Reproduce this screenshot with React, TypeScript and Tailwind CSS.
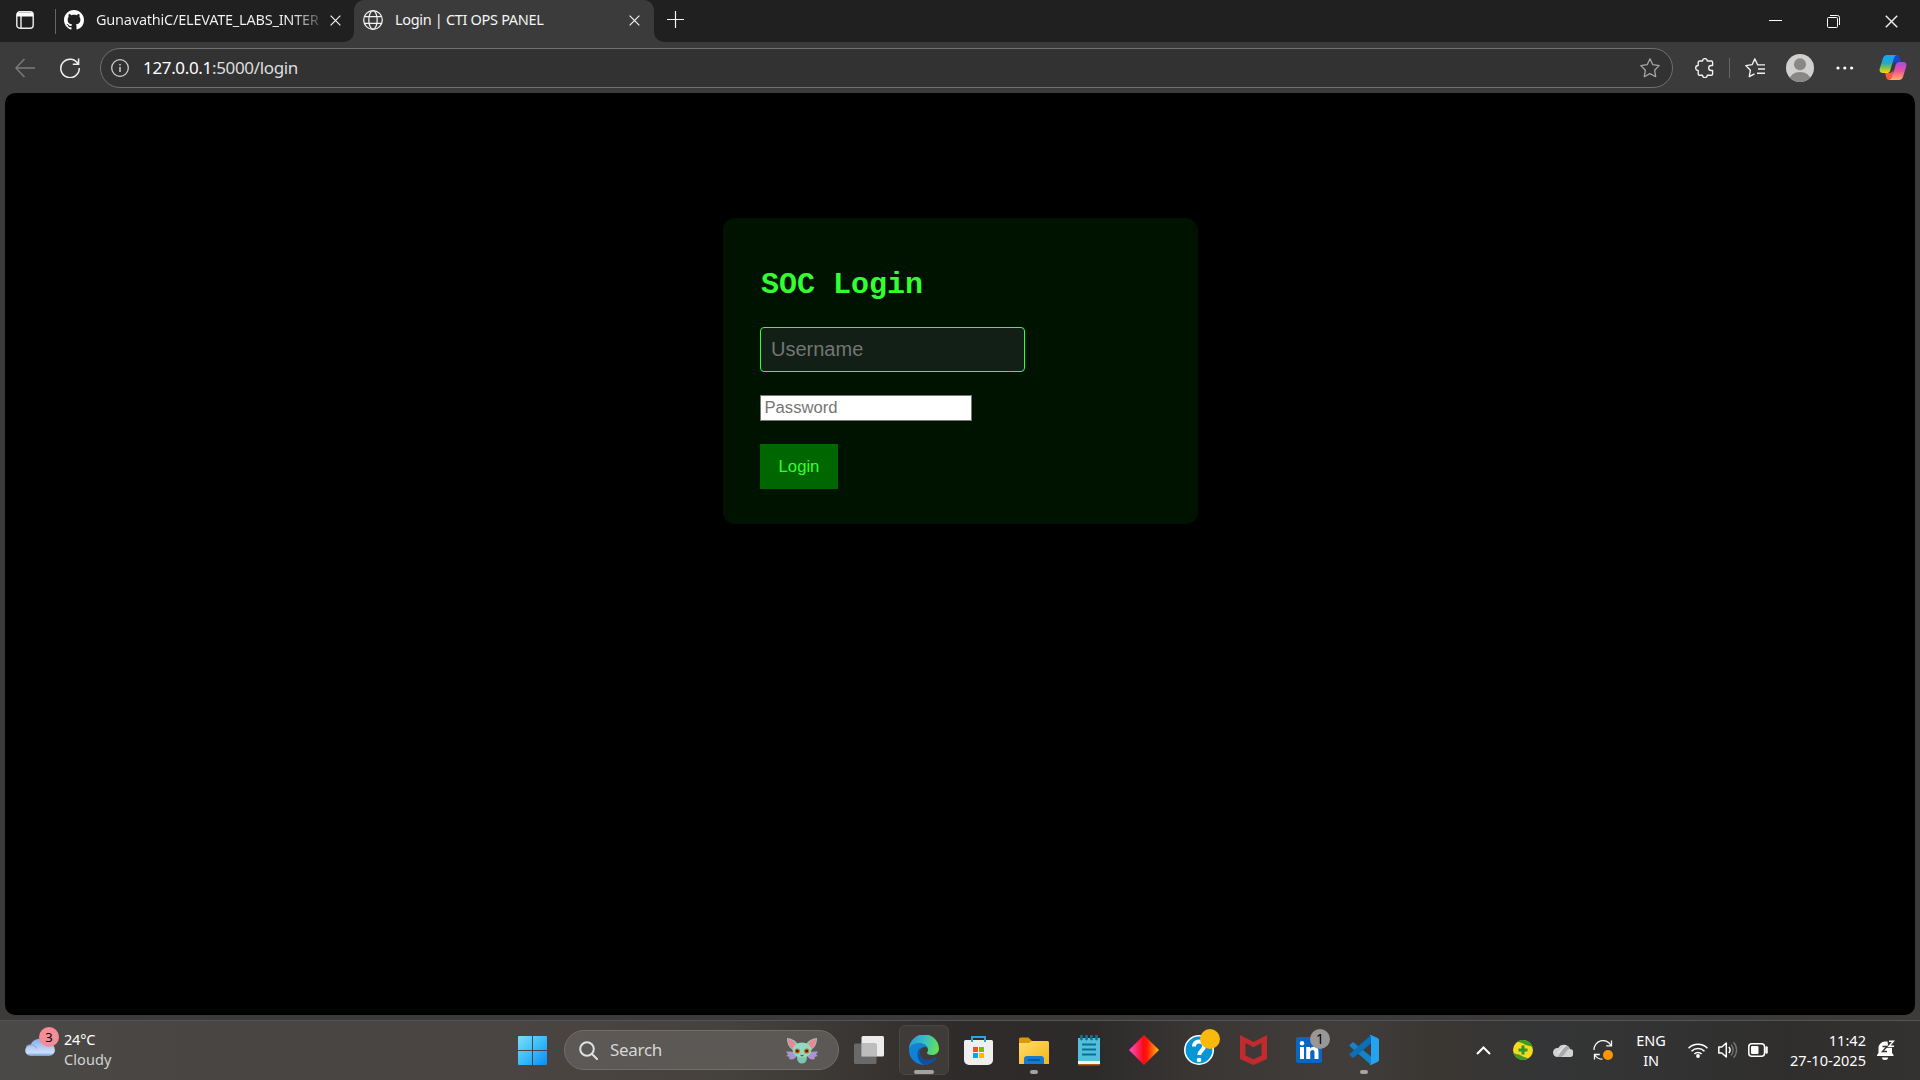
import React from "react";

const UI = "font-['Noto_Sans','Open_Sans',sans-serif] whitespace-nowrap";

function Cross({ className = "" }: { className?: string }) {
  return (
    <svg className={className} viewBox="0 0 12 12" fill="none" stroke="#f2f2f2" strokeWidth="1.3">
      <path d="M.7.7l10.6 10.6M11.3.7L.7 11.3" />
    </svg>
  );
}

function TabStrip() {
  return (
    <div className="flex h-[42px] bg-[#3b3b3b]">
      <div className="flex h-[42px] w-[354px] shrink-0 rounded-br-[10px] bg-[#202020]">
        <svg className="ml-4 mt-[11px] size-[18px] shrink-0" viewBox="0 0 18 18" fill="none" stroke="#eee" strokeWidth="1.4">
          <rect x=".8" y=".8" width="16.4" height="16.4" rx="3" />
          <path d="M1 1.5h16v4H1z" fill="#fff" stroke="none" />
          <path d="M5 5v12" />
        </svg>
        <div className="ml-[21px] mt-[9px] h-[25px] w-px shrink-0 bg-[#666]" />
        <svg className="ml-2 mt-[10px] size-5 shrink-0" viewBox="0 0 16 16" fill="#fff">
          <path d="M8 0C3.58 0 0 3.58 0 8c0 3.54 2.29 6.53 5.47 7.59.4.07.55-.17.55-.38 0-.19-.01-.82-.01-1.49-2.01.37-2.53-.49-2.69-.94-.09-.23-.48-.94-.82-1.13-.28-.15-.68-.52-.01-.53.63-.01 1.08.58 1.23.82.72 1.21 1.87.87 2.33.66.07-.52.28-.87.51-1.07-1.78-.2-3.64-.89-3.64-3.95 0-.87.31-1.59.82-2.15-.08-.2-.36-1.02.08-2.12 0 0 .67-.21 2.2.82.64-.18 1.32-.27 2-.27s1.36.09 2 .27c1.53-1.04 2.2-.82 2.2-.82.44 1.1.16 1.92.08 2.12.51.56.82 1.27.82 2.15 0 3.07-1.87 3.75-3.65 3.95.29.25.54.73.54 1.48 0 1.07-.01 1.93-.01 2.2 0 .21.15.46.55.38A8.01 8.01 0 0 0 16 8c0-4.42-3.58-8-8-8" />
        </svg>
        <span className={`${UI} ml-[12px] mt-[8px] w-[223px] shrink-0 overflow-hidden bg-[linear-gradient(90deg,#f5f5f5_88%,#555_100%)] bg-clip-text text-[14.5px] leading-[22px] tracking-[-0.22px] text-transparent`}>
          GunavathiC/ELEVATE_LABS_INTER
        </span>
        <Cross className="ml-[11px] mt-[15px] size-[11px] shrink-0" />
      </div>
      <div className="w-[300px] shrink-0 bg-[#202020]">
        <div className="flex h-full rounded-t-[10px] bg-[#3b3b3b]">
          <svg className="ml-[9px] mt-[10px] size-5 shrink-0" viewBox="0 0 20 20" fill="none" stroke="#f2f2f2" strokeWidth="1.25">
            <circle cx="10" cy="10" r="9.3" />
            <ellipse cx="10" cy="10" rx="4.2" ry="9.3" />
            <path d="M1.6 6.6h16.8M1.6 13.4h16.8" />
          </svg>
          <span className={`${UI} ml-[12px] mt-[8px] w-[230px] text-[14.5px] leading-[22px] tracking-[-0.32px] text-[#f5f5f5]`}>
            Login | CTI OPS PANEL
          </span>
          <Cross className="ml-[4px] mt-[15px] size-[11px] shrink-0" />
        </div>
      </div>
      <div className="flex flex-1 rounded-bl-[10px] bg-[#202020]">
        <svg className="ml-[13px] mt-[11px] size-[17px]" viewBox="0 0 17 17" stroke="#f5f5f5" strokeWidth="1.2">
          <path d="M8.5 0v17M0 8.5h17" />
        </svg>
        <svg className="ml-auto mt-[15px] h-[13px] w-[13px]" viewBox="0 0 13 13" stroke="#fff" strokeWidth="1">
          <path d="M0 5.5h13" />
        </svg>
        <svg className="ml-[45px] mt-[15px] size-[13px]" viewBox="0 0 13 13" fill="none" stroke="#fff" strokeWidth="1">
          <rect x=".5" y="2.5" width="10" height="10" rx="1" />
          <path d="M3 .5h7.5a2 2 0 0 1 2 2V10" />
        </svg>
        <Cross className="ml-[45px] mr-[22px] mt-[15px] size-[13px]" />
      </div>
    </div>
  );
}

function Toolbar() {
  return (
    <div className="flex h-[51px] items-center bg-[#3b3b3b]">
      <svg className="ml-[15px] size-5" viewBox="0 0 20 20" fill="none" stroke="#7d7d7d" strokeWidth="1.4">
        <path d="M9.5 1L.9 10l8.6 9M1 10h19" />
      </svg>
      <svg className="ml-[25px] size-5" viewBox="0 0 20 20" fill="none" stroke="#f0f0f0" strokeWidth="1.5">
        <path d="M18.2 6.2A9.2 9.2 0 1 0 19.2 10M18.6.4v5.9h-5.8" />
      </svg>
      <div className="ml-5 flex h-[40px] w-[1573px] shrink-0 items-center rounded-full border border-[#707070] bg-[#323232]">
        <svg className="ml-[10px] size-[18px]" viewBox="0 0 18 18" fill="none" stroke="#d0d0d0" strokeWidth="1.3">
          <circle cx="9" cy="9" r="8.3" />
          <path d="M9 8v5M9 5v1.5" strokeWidth="1.5" />
        </svg>
        <span className={`${UI} ml-[14px] text-[17px] leading-6 tracking-[-0.34px] text-[#dedede]`}>
          <span className="text-white">127.0.0.1</span>:5000/login
        </span>
        <svg className="ml-auto mr-[12px] size-5" viewBox="0 0 20 20" fill="none" stroke="#a5a5a5" strokeWidth="1.3" strokeLinejoin="round">
          <path d="M10 .8l2.8 5.9 6.4.9-4.6 4.6 1.1 6.5-5.7-3.1-5.7 3.1 1.1-6.5L.8 7.6l6.4-.9z" />
        </svg>
      </div>
      <svg className="ml-[22px] h-5 w-[19px]" viewBox="0 0 19 20" fill="none" stroke="#f2f2f2" strokeWidth="1.35" strokeLinejoin="round">
        <path d="M4.500 3h3a2.400 2.400 0 0 1 4.800 0h4a1.300 1.300 0 0 1 1.300 1.300v3.200h-1.400a2.500 2.500 0 0 0 0 5h1.400v3.400a1.300 1.300 0 0 1-1.300 1.300h-4a2.400 2.400 0 0 1-4.800 0h-3a1.300 1.300 0 0 1-1.300-1.300v-3.400a2.400 2.400 0 0 1 0-5V4.300A1.300 1.300 0 0 1 4.500 3z" />
      </svg>
      <div className="ml-[15px] h-5 w-px bg-[#666]" />
      <svg className="ml-[15px] size-5" viewBox="0 0 20 20" fill="none" stroke="#f2f2f2" strokeWidth="1.35" strokeLinejoin="round">
        <path d="M13.2 6.7h-.6L9.8.9 7.1 6.7.8 7.6l4.6 4.6-1.1 6.5 5.2-2.9M12 6.9h8M13 11h7M12 15.2h8" />
      </svg>
      <svg className="ml-[21px] size-7" viewBox="0 0 28 28">
        <clipPath id="avatar"><circle cx="14" cy="14" r="14" /></clipPath>
        <g clipPath="url(#avatar)">
          <path d="M0 0h28v28H0z" fill="#d2d0ce" />
          <circle cx="14" cy="10.3" r="6" fill="#8a8886" />
          <ellipse cx="14" cy="26" rx="10.5" ry="8" fill="#8a8886" />
        </g>
      </svg>
      <svg className="ml-[22px] h-1 w-[18px]" viewBox="0 0 18 4" fill="#fff">
        <circle cx="2" cy="2" r="1.6" /><circle cx="8.8" cy="2" r="1.6" /><circle cx="15.6" cy="2" r="1.6" />
      </svg>
      <svg className="ml-[25px] h-[27px] w-7" viewBox="0 0 28 27">
        <defs>
          <linearGradient id="cpA" x1="0" y1="0" x2="0" y2="1"><stop stopColor="#18a4f5" /><stop offset=".45" stopColor="#22a9c4" /><stop offset=".7" stopColor="#7fc04c" /><stop offset="1" stopColor="#fbd70b" /></linearGradient>
          <linearGradient id="cpB" x1="0" y1="0" x2="0" y2="1"><stop stopColor="#a24bea" /><stop offset=".5" stopColor="#f0509b" /><stop offset="1" stopColor="#ffb35c" /></linearGradient>
        </defs>
        <path d="M13 1h5c1.800 0 2.400 1.400 2.800 2.700l1.200 4h-4.500c-2 0-3 1-3.600 3z" fill="#1746cf" />
        <path d="M15 26h-5c-1.800 0-2.400-1.400-2.800-2.700L6 19h4.500c2 0 3-1 3.600-3z" fill="#f75b3c" />
        <path d="M8 1h9.800c-1.800.4-2.600 2-3.200 4l-3.400 11.400c-.6 1.900-1.600 2.600-3.400 2.600H3.900C1 19 .1 17 .8 14.300L3.900 4.500C4.600 2.300 5.900 1 8 1z" fill="url(#cpA)" />
        <path d="M20 26h-9.800c1.800-.4 2.600-2 3.200-4l3.400-11.400C17.400 8.700 18.400 8 20.200 8h3.900c2.900 0 3.800 2 3.100 4.700l-3.100 9.800C23.400 24.700 22.100 26 20 26z" fill="url(#cpB)" />
      </svg>
    </div>
  );
}

function LoginPage() {
  return (
    <div className="mx-[5px] h-[922px] overflow-hidden rounded-[10px] bg-black pt-[125px]">
      <form className="ml-[718px] flex h-[306px] w-[475px] flex-col items-start rounded-xl bg-[#001200] pl-[37px]">
        <h2 className="ml-px mt-[50px] h-[34px] font-['Courier_New','Liberation_Mono',monospace] text-[30px] font-bold leading-[34px] text-[#33ff33]">SOC Login</h2>
        <input
          placeholder="Username"
          className="mt-[25px] h-[45px] w-[265px] rounded-[4px] border border-[#33ff33] bg-[#111f17] px-[10px] font-['Liberation_Sans',sans-serif] text-[20px] placeholder:text-[#757575]"
        />
        <input
          type="password"
          placeholder="Password"
          className="mt-[23px] h-[26px] w-[212px] border border-[#767676] bg-white px-[3.500px] font-['Liberation_Sans',sans-serif] text-[16.67px] placeholder:text-[#757575]"
        />
        <button type="button" className="mt-[23px] h-[45px] w-[78px] bg-[#006600] font-['Liberation_Sans',sans-serif] text-[16.67px] text-[#33ff33]">
          Login
        </button>
      </form>
    </div>
  );
}

function Tile({ children, active = false, run = "" }: { children: React.ReactNode; active?: boolean; run?: string }) {
  return (
    <div className={`relative flex size-[50px] shrink-0 items-center justify-center rounded-md border ${active ? "border-[#4a4745] bg-[#3e3b39]" : "border-transparent"}`}>
      {children}
      {run && <span className={`absolute bottom-0 h-1 rounded-full bg-[#a5a3a2] ${run}`} />}
    </div>
  );
}

function Mascot() {
  return (
    <svg className="h-[27px] w-[34px]" viewBox="0 0 34 27">
      <path d="M12 17C8 14 4 14.500 1 14.500l2 3-2 1.500 3.500 1-.5 2c3.500 1 6 0 8-3zM22 17c4-3 8-2.500 11-2.500l-2 3 2 1.500-3.500 1 .5 2c-3.500 1-6 0-8-3z" fill="#a995cf" />
      <path d="M2 1c4 0 10 3 11 7l-5 5C3 10 2 5 2 1zM32 1c-4 0-10 3-11 7l5 5c5-3 6-8 6-12z" fill="#93c9b8" />
      <path d="M3 2c3.500.5 7 3 8 6l-3.500 4c-3-2-4.500-6-4.500-10zM31 2c-3.500.5-7 3-8 6l3.500 4c3-2 4.500-6 4.500-10z" fill="#ee8590" />
      <ellipse cx="17" cy="21" rx="5" ry="5.500" fill="#79c7b0" />
      <ellipse cx="17" cy="13" rx="9.500" ry="7.500" fill="#93d9c0" />
      <circle cx="12.300" cy="14" r="2.600" fill="#c4671c" /><circle cx="21.700" cy="14" r="2.600" fill="#c4671c" />
      <circle cx="12.300" cy="14" r="1.300" fill="#3d1c0c" /><circle cx="21.700" cy="14" r="1.300" fill="#3d1c0c" />
      <path d="M15 17.500q2 1 4 0q-2 4-4 0" fill="#a82e3c" />
    </svg>
  );
}

function Taskbar() {
  return (
    <div className="mt-[5px] flex h-[60px] items-center border-t border-[#555453] bg-[linear-gradient(90deg,#4b4947_0%,#484542_12%,#4a4542_27%,#45413d_38%,#3b3734_44%,#2e2b2a_50%,#2d2b2a_57%,#3a3735_63%,#403d3b_70%,#3a3632_75%,#343536_80%,#333333_86%,#2f2e2d_93%,#333231_100%)] pb-px">
      <div className="relative ml-[25px] flex h-[50px] w-[140px]">
        <svg className="mt-[11px] h-5 w-[30px]" viewBox="0 0 30 20">
          <defs>
            <linearGradient id="cloud" x1="0" y1="0" x2="0" y2="1"><stop stopColor="#84ace9" /><stop offset=".8" stopColor="#cfdff7" /><stop offset="1" stopColor="#6f98dc" /></linearGradient>
          </defs>
          <path d="M6 20a5.500 5.500 0 0 1-.5-11A10 10 0 0 1 23 7a7 7 0 0 1 7 7 6 6 0 0 1-6 6z" fill="url(#cloud)" />
          <path d="M1 10.500c4-3 9-2 11 2" fill="none" stroke="#7ba4e4" />
        </svg>
        <span className={`${UI} absolute left-[14px] top-[2px] size-5 rounded-full bg-[#f58d98] text-center text-[13px] leading-5 text-black`}>3</span>
        <div className={`${UI} ml-[9px] mt-[4px] text-[14.500px] leading-5 tracking-[-0.200px] text-white`}>
          <div>24°C</div>
          <div className="tracking-[0.080px] text-[#d3d3d3]">Cloudy</div>
        </div>
      </div>
      <div className="ml-[342px] flex items-center gap-[5px]">
        <Tile>
          <svg className="size-[29px]" viewBox="0 0 29 29">
            <defs><linearGradient id="win" x1="0" y1="0" x2="1" y2="1"><stop stopColor="#7ddcfb" /><stop offset=".5" stopColor="#3bbdf7" /><stop offset="1" stopColor="#0a8cf5" /></linearGradient></defs>
            <path d="M1 0h13v14H0V1a1 1 0 0 1 1-1zM15 0h13a1 1 0 0 1 1 1v13H15zM0 15h14v14H1a1 1 0 0 1-1-1zM15 15h14v13a1 1 0 0 1-1 1H15z" fill="url(#win)" />
          </svg>
        </Tile>
        <div className="ml-[2px] flex h-10 w-[275px] items-center rounded-full border border-[#706d6a] bg-[#5b5855]">
          <svg className="ml-[14px] size-[19px]" viewBox="0 0 19 19" fill="none" stroke="#dfe1e4" strokeWidth="2" strokeLinecap="round">
            <circle cx="8" cy="8" r="6.800" /><path d="M13 13l5 5" />
          </svg>
          <span className={`${UI} ml-[12px] text-[17px] leading-6 tracking-[-0.300px] text-[#d8d6d4]`}>Search</span>
          <span className="ml-auto mr-[19px]"><Mascot /></span>
        </div>
        <Tile>
          <svg className="h-7 w-[30px]" viewBox="0 0 30 28">
            <rect x="7.500" y="0" width="22.500" height="20.500" rx="1.500" fill="#ececec" />
            <rect x="0" y="7.500" width="22.500" height="20.500" rx="1.500" fill="#777" fillOpacity=".8" />
            <path d="M7.500 7.500h15v13h-15z" fill="#bdbdbd" />
          </svg>
        </Tile>
        <Tile active run="w-5">
          <svg className="size-[30px]" viewBox="0 0 30 30">
            <defs>
              <linearGradient id="eA" x1="0" y1=".3" x2="1" y2=".5"><stop stopColor="#219bdb" /><stop offset=".5" stopColor="#35c1c3" /><stop offset="1" stopColor="#66e052" /></linearGradient>
              <linearGradient id="eB" x1="0" y1="0" x2=".4" y2="1"><stop stopColor="#1583d0" /><stop offset="1" stopColor="#0b7fdb" /></linearGradient>
            </defs>
            <path d="M0 15A15 15 0 0 1 30 13.500c0 4-3 6.500-7 6.500-3 0-5-.8-5-2 0-.8 1-1.400 1-3C19 11 15 8.500 11 8.500 5 8.500 1 11 0 15z" fill="url(#eA)" />
            <path d="M0 15c.5-4.500 5-7 10-6.700 4 .2 8 2 8.600 4.700-3-2.200-7.600-.5-8 4-.4 6 5 10.500 11 9.500-1.500 1.800-4 3.500-6.600 3.500A15 15 0 0 1 0 15z" fill="url(#eB)" />
            <path d="M12 12.500c-3 4.500-.5 12 6 12.500 4 .3 7-1.500 9-3 .6-.4 1 .1.700.7C25 27.500 20 30 15.500 30 9 28 5.500 17 12 12.500z" fill="#12509f" />
          </svg>
        </Tile>
        <Tile>
          <svg className="mr-px size-[29px]" viewBox="0 0 29 29">
            <path d="M8 6V1h13v5" fill="none" stroke="#22a7e6" strokeWidth="2" />
            <path d="M0 5.500A1.500 1.500 0 0 1 1.500 4h26A1.500 1.500 0 0 1 29 5.500V24a5 5 0 0 1-5 5H5a5 5 0 0 1-5-5z" fill="#efefef" />
            <path d="M8 1v5M21 1v5" stroke="#22a7e6" strokeWidth="2" />
            <path d="M9 11h5v5H9z" fill="#f25022" /><path d="M15 11h5v5h-5z" fill="#7fba00" /><path d="M9 17h5v5H9z" fill="#00a4ef" /><path d="M15 17h5v5h-5z" fill="#ffb900" />
          </svg>
        </Tile>
        <Tile run="w-2">
          <svg className="h-[27px] w-[30px]" viewBox="0 0 30 27">
            <defs><linearGradient id="fold" x1="0" y1="0" x2="1" y2="1"><stop stopColor="#ffdc6b" /><stop offset="1" stopColor="#f7b516" /></linearGradient></defs>
            <path d="M0 2a1.500 1.500 0 0 1 1.500-1.500h8L13 4v4H0z" fill="#d89a07" />
            <path d="M0 6h10l3-2h15.500A1.500 1.500 0 0 1 30 5.500V27H0z" fill="url(#fold)" />
            <path d="M5 22a3 3 0 0 1 3-3h14a3 3 0 0 1 3 3v5H5z" fill="#147bd1" /><path d="M9 23h12" stroke="#0a4f94" strokeWidth="1.500" />
          </svg>
        </Tile>
        <Tile>
          <svg className="h-[31px] w-[22px]" viewBox="0 0 22 31">
            <path d="M0 27h22v2.500a1 1 0 0 1-1 1H1a1 1 0 0 1-1-1z" fill="#b05a19" /><path d="M0 25h22v4H0z" fill="#f5f5f5" />
            <path d="M0 3h22v23H0z" fill="#56bedd" />
            <path d="M4 9.500h14M4 14.500h14M4 19.500h14" stroke="#067394" strokeWidth="2" />
            <path d="M3.500 1v3M8.500 1v3M13.500 1v3M18.500 1v3" stroke="#14708c" strokeWidth="2.800" strokeLinecap="round" />
          </svg>
        </Tile>
        <Tile>
          <svg className="size-[30px]" viewBox="0 0 30 30">
            <defs><linearGradient id="dia"><stop stopColor="#ff4fd0" /><stop offset=".48" stopColor="#fb0b12" /><stop offset=".6" stopColor="#ff1808" /><stop offset="1" stopColor="#ffc20b" /></linearGradient></defs>
            <path d="M15 0l15 15-15 15L0 15z" fill="url(#dia)" />
          </svg>
        </Tile>
        <Tile>
          <svg className="size-[30px]" viewBox="0 0 30 30">
            <circle cx="15" cy="15" r="14.200" fill="#0796d5" stroke="#fff" strokeWidth="1.600" />
            <path d="M10 11.500c0-3 2-5 5-5s5.200 1.800 5.200 4.600c0 4.200-5 4.400-5 9" fill="none" stroke="#fff" strokeWidth="4" /><circle cx="15" cy="25" r="2.300" fill="#fff" />
          </svg>
          <span className="absolute left-[25px] top-[3px] size-5 rounded-full bg-[#fab90b]" />
        </Tile>
        <Tile>
          <svg className="mr-px h-[30px] w-[27px]" viewBox="0 0 27 30">
            <path d="M0 0l13.500 7L27 0v24l-13.500 6L0 24zM5.500 8v12.500l8 3.700 8-3.700V8l-8 4.300z" fill="#c22a2d" fillRule="evenodd" />
          </svg>
        </Tile>
        <Tile>
          <svg className="size-[26px]" viewBox="0 0 26 26">
            <rect width="26" height="26" rx="2" fill="#0a66c2" />
            <circle cx="6" cy="6.200" r="2.200" fill="#fff" />
            <path d="M4 10h4v12H4zM10.200 10H14v1.700c.6-1.100 2-2 4-2 3.700 0 4.500 2.400 4.500 5.600V22h-4v-6c0-1.500-.1-3-2-3s-2.300 1.400-2.300 3v6h-4z" fill="#fff" />
          </svg>
          <span className={`${UI} absolute left-[25px] top-[3px] size-5 rounded-full bg-[#999795] text-center text-[14px] leading-[20px] text-black`}>1</span>
        </Tile>
        <Tile run="w-2">
          <svg className="size-[30px]" viewBox="0 0 30 30">
            <path d="M1 9.500l2-1.800c.6-.5 1.300-.5 1.800-.1L22 21.500V30L.8 11.200c-.5-.5-.5-1.200.2-1.700z" fill="#1583c9" />
            <path d="M1 20.500l2 1.800c.6.500 1.300.5 1.800.1L22 8.500V0L.8 18.800c-.5.500-.5 1.200.2 1.700z" fill="#0a6fb8" />
            <path d="M20.500 29.500L22 28.700V1.300L20.500.5c.6-.5 1.400-.6 2-.3l6 2.900c1 .5 1.500 1.200 1.500 2.100v19.600c0 .9-.5 1.600-1.500 2.100l-6 2.900c-.6.300-1.400.2-2-.3z" fill="#24a3ef" />
          </svg>
        </Tile>
      </div>
      <svg className="ml-[87px] h-[9px] w-[15px]" viewBox="0 0 15 9" fill="none" stroke="#fff" strokeWidth="2"><path d="M1 8l6.500-6.500L14 8" /></svg>
      <svg className="ml-[22px] size-5" viewBox="0 0 20 20">
        <circle cx="10" cy="10" r="10" fill="#f8d81c" />
        <path d="M4.500 1.700A10 10 0 0 1 19.800 8C17.500 5 14.500 6.300 12 4.600 9.500 2.800 7 2.500 4.500 1.700zM15.500 18.300A10 10 0 0 1 .2 12c2.300 3 5.300 1.700 7.800 3.400 2.500 1.800 5 2.100 7.500 2.900z" fill="#3c9a27" />
        <path d="M8.500 5.500h3v3h3v3h-3v3h-3v-3h-3v-3h3z" fill="#2f962b" />
      </svg>
      <svg className="ml-5 h-[14px] w-5" viewBox="0 0 20 14">
        <path d="M4.500 14a4.500 4.500 0 0 1 0-9h.7a6.500 6.500 0 0 1 11.800 1 4 4 0 0 1-1 8z" fill="#d2d2d2" />
        <path d="M4 14C7 13 8 6 13 3c2 0 3.500 1.500 4 3-4 0-4 6-9 8z" fill="#a9a9a9" />
        <path d="M5 9.500c4-1 4-5 8-7" fill="none" stroke="#f5f5f5" />
      </svg>
      <svg className="ml-5 size-5" viewBox="0 0 20 20" fill="none" stroke="#f5f5f5" strokeWidth="1.300">
        <path d="M1 10A9 9 0 0 1 18 5.500M18.500.5v5.300h-5.300M1.500 19.500v-5h5.300M1.700 14.700A9 9 0 0 0 9.500 19.200" />
        <circle cx="15" cy="15" r="5" fill="#fc9607" stroke="none" />
      </svg>
      <div className={`${UI} ml-[18px] w-10 text-center text-[14.500px] leading-5 tracking-[-0.100px] text-white`}>
        <div>ENG</div><div>IN</div>
      </div>
      <svg className="ml-[17px] h-4 w-5" viewBox="0 0 20 16" fill="none" stroke="#fff" strokeWidth="1.600">
        <path d="M.6 6.200a13.300 13.300 0 0 1 18.800 0M3.500 9.200a9.200 9.200 0 0 1 13 0M6.400 12a5.100 5.100 0 0 1 7.200 0" /><circle cx="10" cy="14" r="1.900" fill="#fff" stroke="none" />
      </svg>
      <svg className="ml-[10px] h-[18px] w-5" viewBox="0 0 20 18" fill="none" stroke="#fff" strokeWidth="1.500" strokeLinejoin="round">
        <path d="M.8 6h3L8.300 2v14L3.800 12h-3zM10.800 6a4.500 4.500 0 0 1 0 6" /><path d="M13 3.500a8 8 0 0 1 0 11M15.500 1.200a11.500 11.500 0 0 1 0 15.600" stroke="#777" strokeWidth="1.300" />
      </svg>
      <svg className="ml-[10px] h-[14px] w-5" viewBox="0 0 20 14" fill="none" stroke="#fff" strokeWidth="1.500">
        <rect x=".8" y=".8" width="15.700" height="12.400" rx="3" /><rect x="3" y="3" width="7.500" height="8" rx="1" fill="#fff" stroke="none" /><path d="M18.500 4.500v5" strokeWidth="2.500" strokeLinecap="round" />
      </svg>
      <div className={`${UI} ml-[17px] w-[81px] text-right text-[14.500px] leading-5 tracking-[0.030px] text-white`}>
        <div>11:42</div><div>27-10-2025</div>
      </div>
      <svg className="ml-[11px] h-[20px] w-[18px]" viewBox="0 0 18 20">
        <path d="M1.500 13V8A6.500 6.500 0 0 1 8 1.500h2.500L11 5h4v8l1.500 2v1H0v-1z" fill="#fff" /><path d="M5 17.500h6a3 2.500 0 0 1-6 0z" fill="#fff" />
        <path d="M5.500 6.500h4.500l-4.500 5H10" fill="none" stroke="#333" strokeWidth="1.400" /><path d="M12 1.200h4.500l-4.500 5H17" fill="none" stroke="#333" strokeWidth="3" /><path d="M12 1.200h4.500l-4.500 5H17" fill="none" stroke="#fff" strokeWidth="1.400" />
      </svg>
    </div>
  );
}

export default function App() {
  return (
    <div className="h-[1080px] w-[1920px] overflow-hidden bg-[#3b3b3b]">
      <TabStrip />
      <Toolbar />
      <LoginPage />
      <Taskbar />
    </div>
  );
}
